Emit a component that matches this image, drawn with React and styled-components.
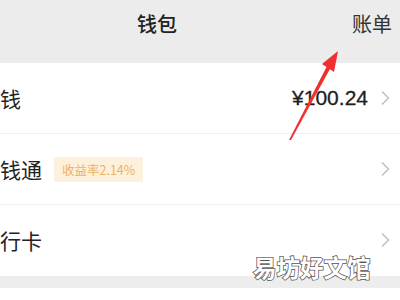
import styled, { createGlobalStyle } from 'styled-components';

const GlobalStyle = createGlobalStyle`
  html, body {
    margin: 0;
    padding: 0;
    background: #ffffff;
  }
  body {
    width: 400px;
    height: 300px;
    overflow: hidden;
    font-family: "Noto Sans CJK SC", "Liberation Sans", sans-serif;
  }
`;

const Page = styled.div`
  position: relative;
  width: 400px;
  height: 300px;
  display: flex;
  flex-direction: column;
  background: #ffffff;
  overflow: hidden;
`;

const Header = styled.header`
  height: 63px;
  flex: none;
  display: flex;
  align-items: center;
  justify-content: space-between;
  padding: 0 8px 16px 137px;
  box-sizing: border-box;
  background: #ececec;
`;

const Title = styled.h1`
  margin: 0;
  font-size: 20px;
  font-weight: 500;
  color: #222;
`;

const Bill = styled.span`
  font-size: 20px;
  color: #333;
`;

const List = styled.div`
  display: flex;
  flex-direction: column;
`;

const Row = styled.div`
  height: 71px;
  box-sizing: border-box;
  display: flex;
  align-items: center;
  gap: 12px;
  padding: 0 10px 0 0;
  border-bottom: 1px solid ${(p) => (p.$last ? 'transparent' : '#efefef')};
`;

const Label = styled.span`
  font-size: 21px;
  color: #222;
`;

const Badge = styled.span`
  display: inline-flex;
  align-items: center;
  height: 25px;
  padding: 0 8px;
  background: #fdf0dd;
  color: #efb060;
  font-size: 12.5px;
  border-radius: 2px;
`;

const Spacer = styled.div`
  flex: 1;
`;

const Amount = styled.span`
  font-family: "Liberation Sans", sans-serif;
  font-size: 21px;
  color: #1e1e1e;
  -webkit-text-stroke: 0.3px #1e1e1e;
`;

const Band = styled.div`
  height: 12px;
  flex: none;
  background: #ededed;
`;

const Watermark = styled.div`
  position: absolute;
  left: 253px;
  top: 250px;
  font-size: 23.5px;
  font-weight: 700;
  color: #ffffff;
  -webkit-text-stroke: 1.5px #555;
  paint-order: stroke fill;
`;

const Arrow = styled.svg`
  position: absolute;
  left: 0;
  top: 0;
  pointer-events: none;
`;

function Chevron() {
  return (
    <svg width="10" height="16" viewBox="0 0 10 16">
      <path d="M2 1.5 L8.5 8 L2 14.5" fill="none" stroke="#bdbdbd" strokeWidth="1.4" />
    </svg>
  );
}

export default function App() {
  return (
    <>
      <GlobalStyle />
      <Page>
        <Header>
          <Title>钱包</Title>
          <Bill>账单</Bill>
        </Header>
        <List>
          <Row>
            <Label>钱</Label>
            <Spacer />
            <Amount>¥100.24</Amount>
            <Chevron />
          </Row>
          <Row>
            <Label>钱通</Label>
            <Badge>收益率2.14%</Badge>
            <Spacer />
            <Chevron />
          </Row>
          <Row $last>
            <Label>行卡</Label>
            <Spacer />
            <Chevron />
          </Row>
        </List>
        <Band />
        <Watermark>易坊好文馆</Watermark>
        <Arrow width="400" height="300" viewBox="0 0 400 300">
          <path d="M289 140 L327 66 L330.5 68 L291 140 Z" fill="#f03030" />
          <path d="M338 51 L322 64 L334 72 Z" fill="#f03030" />
        </Arrow>
      </Page>
    </>
  );
}
